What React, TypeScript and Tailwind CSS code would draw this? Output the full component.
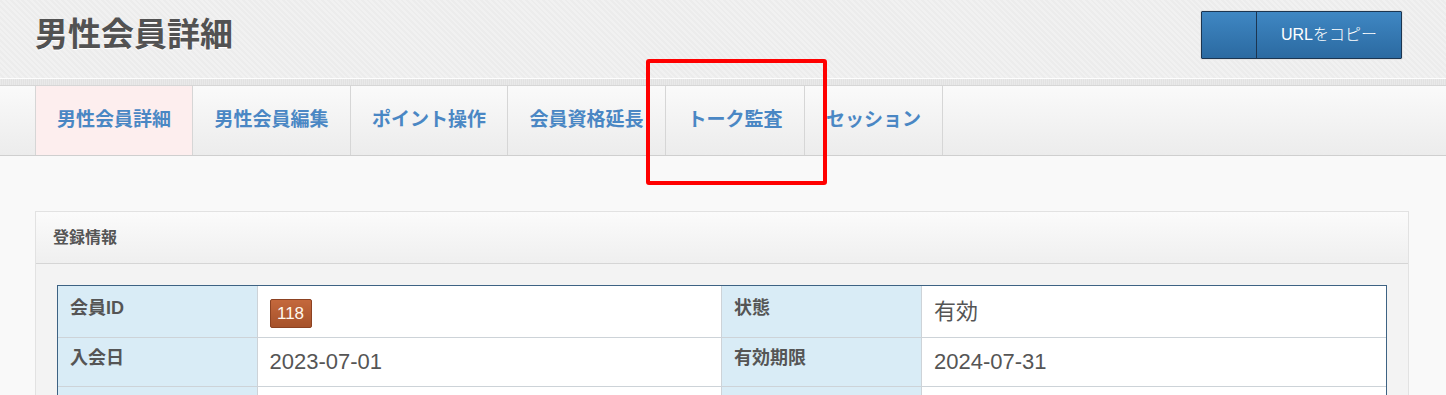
const tabs = ["男性会員詳細", "男性会員編集", "ポイント操作", "会員資格延長", "トーク監査", "セッション"];
const tabWidths = ["w-[158px]", "w-[158px]", "w-[157px]", "w-[158px]", "w-[139px]", "w-[138px]"];

type Row = { l1: string; v1: React.ReactNode; l2: string; v2: React.ReactNode };

const rows: Row[] = [
  {
    l1: "会員ID",
    v1: (
      <span className="inline-flex h-[29px] w-[42px] items-center justify-center rounded-[2px] border border-[#8c4222] bg-gradient-to-b from-[#c4683c] to-[#a6522b] text-[17px] text-[#fff8ee]">
        118
      </span>
    ),
    l2: "状態",
    v2: "有効",
  },
  { l1: "入会日", v1: "2023-07-01", l2: "有効期限", v2: "2024-07-31" },
  { l1: "\u00a0", v1: "\u00a0", l2: "\u00a0", v2: "\u00a0" },
];

function InfoTable() {
  return (
    <div className="border border-[#3d6283] bg-white">
      <table className="w-full table-fixed border-collapse border-hidden">
        <colgroup>
          <col className="w-[199px]" />
          <col />
          <col className="w-[200px]" />
          <col />
        </colgroup>
        <tbody>
          {rows.map((r, i) => (
            <tr key={i} className={i === 0 ? "h-[51px]" : "h-[49px]"}>
              <th className="border border-[#cdd3d8] bg-[#d9ecf6] px-[12px] pb-[6px] text-left align-middle text-[18px] font-bold text-[#555]">
                {r.l1}
              </th>
              <td className="border border-[#cdd3d8] px-[12px] align-middle text-[22px] text-[#555]">{r.v1}</td>
              <th className="border border-[#cdd3d8] bg-[#d9ecf6] px-[12px] pb-[6px] text-left align-middle text-[18px] font-bold text-[#555]">
                {r.l2}
              </th>
              <td className="border border-[#cdd3d8] px-[12px] align-middle text-[22px] text-[#555]">{r.v2}</td>
            </tr>
          ))}
        </tbody>
      </table>
    </div>
  );
}

export default function App() {
  return (
    <div className="relative min-h-[395px] bg-[#f9f9f9] font-['Liberation_Sans','Noto_Sans_CJK_JP',sans-serif]">
      {/* page header */}
      <header className="flex h-[78px] items-center justify-between bg-[#efefef] bg-[repeating-linear-gradient(45deg,#f1f1f1_0,#f1f1f1_2px,#ececec_2px,#ececec_4px)] pr-[44px] pb-[9px] pl-[35px]">
        <h1 className="text-[33px] font-bold text-[#525252] [text-shadow:0_1px_0_#fff]">男性会員詳細</h1>
        <button className="flex h-[48px] w-[201px] rounded-[1px] border border-[#1c3550] bg-gradient-to-b from-[#3f87c3] to-[#2b6aa1] text-white shadow-[0_0_0_1px_#e2e2e2]">
          <span className="w-[55px] border-r border-[#1c3550]" />
          <span className="flex flex-1 items-center justify-center text-[16px] font-light">URLをコピー</span>
        </button>
      </header>

      {/* separator band */}
      <div className="h-[8px] border-t border-[#fdfdfd] border-b border-b-[#d6d6d6] bg-[#e8e8e8] bg-[repeating-linear-gradient(90deg,#e9e9e9_0,#e9e9e9_1px,#e2e2e2_1px,#e2e2e2_2px)]" />

      {/* tabs */}
      <nav className="flex h-[70px] border-b border-[#cfcfcf] bg-gradient-to-b from-[#fafafa] to-[#ececec] pl-[35px]">
        {tabs.map((t, i) => (
          <div
            key={t}
            className={`flex ${tabWidths[i]} items-center justify-center border-r border-[#d6d6d6] text-[19px] font-bold text-[#4a87c4] ${
              i === 0 ? "border-l bg-[#fdeeee]" : ""
            }`}
          >
            {t}
          </div>
        ))}
      </nav>

      {/* panel */}
      <main className="px-[37px] pt-[55px] pl-[35px]">
        <section className="border border-[#e2e2e2] bg-[#f3f3f3]">
          <div className="flex h-[52px] items-center border-b border-[#d5d5d5] bg-gradient-to-b from-[#fbfbfb] to-[#efefef] px-[17px]">
            <h2 className="text-[16px] font-bold text-[#555]">登録情報</h2>
          </div>
          <div className="p-[21px]">
            <InfoTable />
          </div>
        </section>
      </main>

      {/* highlight annotation */}
      <div className="pointer-events-none absolute top-[59px] left-[646px] h-[126px] w-[181px] rounded-[3px] border-4 border-[#ff0000]" />
    </div>
  );
}
